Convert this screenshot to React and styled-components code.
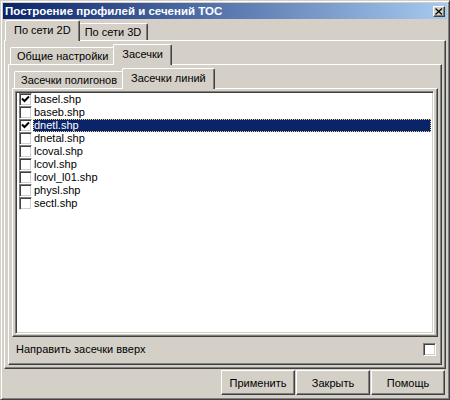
import React from "react";
import styled, { createGlobalStyle } from "styled-components";

const files = [
  { name: "basel.shp", checked: true },
  { name: "baseb.shp", checked: false },
  { name: "dnetl.shp", checked: true, selected: true },
  { name: "dnetal.shp", checked: false },
  { name: "lcoval.shp", checked: false },
  { name: "lcovl.shp", checked: false },
  { name: "lcovl_l01.shp", checked: false },
  { name: "physl.shp", checked: false },
  { name: "sectl.shp", checked: false },
];

const Check = ({ checked }) => (
  <StyledCheck>
    {checked && (
      <svg width="9" height="9" viewBox="0 0 9 9">
        <path d="M1 3.5 L3.5 6 L8 1.5" fill="none" stroke="#000" strokeWidth="2" />
      </svg>
    )}
  </StyledCheck>
);

const App = () => {
  return (
    <>
      <GlobalStyle />
      <Window>
        <TitleBar>
          <TitleText>Построение профилей и сечений ТОС</TitleText>
          <CloseButton>
            <svg width="8" height="7" viewBox="0 0 8 7">
              <path d="M0.5 0.5 L7 6.5 M7 0.5 L0.5 6.5" stroke="#000" strokeWidth="1.2" />
            </svg>
          </CloseButton>
        </TitleBar>
        <Body>
          <TabStrip $h={21} $left={3}>
            <Tab $active>По сети 2D</Tab>
            <Tab>По сети 3D</Tab>
          </TabStrip>
          <Panel $pad="3px 3px 3px 3px">
            <TabStrip $h={20} $left={2}>
              <Tab>Общие настройки</Tab>
              <Tab $active>Засечки</Tab>
            </TabStrip>
            <Panel $pad="3px 3px 0 3px">
              <TabStrip $h={20} $left={2}>
                <Tab>Засечки полигонов</Tab>
                <Tab $active>Засечки линий</Tab>
              </TabStrip>
              <Panel $pad="2px 3px 2px 2px">
                <ListBox>
                  {files.map((f) => (
                    <ListRow key={f.name}>
                      <Check checked={f.checked} />
                      <RowLabel $selected={f.selected}>{f.name}</RowLabel>
                    </ListRow>
                  ))}
                </ListBox>
              </Panel>
              <OptionRow>
                <span>Направить засечки вверх</span>
                <Check checked={false} />
              </OptionRow>
            </Panel>
          </Panel>
          <ButtonRow>
            <Button>Применить</Button>
            <Button>Закрыть</Button>
            <Button>Помощь</Button>
          </ButtonRow>
        </Body>
      </Window>
    </>
  );
};

export default App;

/* styles */

const GlobalStyle = createGlobalStyle`
  html, body {
    margin:0;
    padding:0;
    background:#d4d0c8;
  }
  body {
    font-family: "Liberation Sans", Arial, sans-serif;
    font-size:11px;
    color:#000;
  }
`;

const Window = styled.div`
  width:450px;
  height:400px;
  box-sizing:border-box;
  background:#d4d0c8;
  border:1px solid;
  border-color:#d4d0c8 #404040 #404040 #d4d0c8;
  box-shadow: inset 1px 1px #fff, inset -1px -1px #808080;
  padding:2px;
  display:flex;
  flex-direction:column;
`;

const TitleBar = styled.div`
  height:16px;
  flex:none;
  display:flex;
  align-items:center;
  justify-content:space-between;
  padding:0 2px 0 2px;
  background:linear-gradient(to right, #0a246a, #a6caf0);
`;

const TitleText = styled.div`
  color:#fff;
  font-weight:bold;
  font-size:11.5px;
  white-space:nowrap;
`;

const CloseButton = styled.div`
  width:12px;
  height:11px;
  box-sizing:border-box;
  background:#d4d0c8;
  border:1px solid;
  border-color:#fff #404040 #404040 #fff;
  box-shadow: inset -1px -1px #808080;
  display:flex;
  align-items:center;
  justify-content:center;
`;

const Body = styled.div`
  flex:1;
  min-height:0;
  display:flex;
  flex-direction:column;
  padding:0 1px;
`;

const TabStrip = styled.div`
  flex:none;
  height:${(p) => p.$h}px;
  display:flex;
  align-items:flex-end;
  padding-left:${(p) => p.$left}px;
`;

const Tab = styled.div`
  box-sizing:border-box;
  height:${(p) => (p.$active ? 21 : 17)}px;
  padding:0 ${(p) => (p.$active ? 8 : 6)}px ${(p) => (p.$active ? 2 : 0)}px;
  margin:0 ${(p) => (p.$active ? -2 : 0)}px ${(p) => (p.$active ? -1 : 0)}px;
  position:relative;
  z-index:${(p) => (p.$active ? 1 : 0)};
  background:#d4d0c8;
  border-top:1px solid #fff;
  border-left:1px solid #fff;
  border-right:1px solid #404040;
  box-shadow: inset -1px 0 #808080;
  border-radius:2px 2px 0 0;
  display:flex;
  align-items:center;
  white-space:nowrap;
`;

const Panel = styled.div`
  flex:1;
  min-height:0;
  display:flex;
  flex-direction:column;
  background:#d4d0c8;
  border-top:1px solid #fff;
  border-left:1px solid #fff;
  border-right:1px solid #404040;
  border-bottom:1px solid #404040;
  box-shadow: inset -1px -1px #808080;
  padding:${(p) => p.$pad};
`;

const ListBox = styled.div`
  flex:1;
  background:#fff;
  border:1px solid;
  border-color:#808080 #fff #fff #808080;
  box-shadow: inset 1px 1px #404040, inset -1px -1px #d4d0c8;
  padding:1px 2px 0 3px;
`;

const ListRow = styled.div`
  display:flex;
  align-items:center;
  height:13px;
`;

const StyledCheck = styled.div`
  width:13px;
  height:13px;
  flex:none;
  box-sizing:border-box;
  background:#fff;
  border:1px solid;
  border-color:#808080 #fff #fff #808080;
  box-shadow: inset 1px 1px #404040, inset -1px -1px #d4d0c8;
  display:flex;
  align-items:center;
  justify-content:center;
`;

const RowLabel = styled.div`
  flex:1;
  height:13px;
  line-height:13px;
  margin-left:1px;
  padding-left:1px;
  white-space:nowrap;
  background:${(p) => (p.$selected ? "#0a246a" : "transparent")};
  color:${(p) => (p.$selected ? "#fff" : "#000")};
  outline:${(p) => (p.$selected ? "1px dotted #f0d080" : "none")};
  outline-offset:-1px;
`;

const OptionRow = styled.div`
  flex:none;
  height:27px;
  display:flex;
  align-items:center;
  justify-content:space-between;
  padding:0 2px 3px 4px;
  box-sizing:border-box;
`;

const ButtonRow = styled.div`
  flex:none;
  height:28px;
  display:flex;
  justify-content:flex-end;
  align-items:flex-start;
  gap:1px;
  padding:1px 1px 0 0;
  box-sizing:border-box;
`;

const Button = styled.div`
  width:74px;
  height:25px;
  box-sizing:border-box;
  background:#d4d0c8;
  border:1px solid;
  border-color:#fff #404040 #404040 #fff;
  box-shadow: inset -1px -1px #808080;
  display:flex;
  align-items:center;
  justify-content:center;
  white-space:nowrap;
`;
